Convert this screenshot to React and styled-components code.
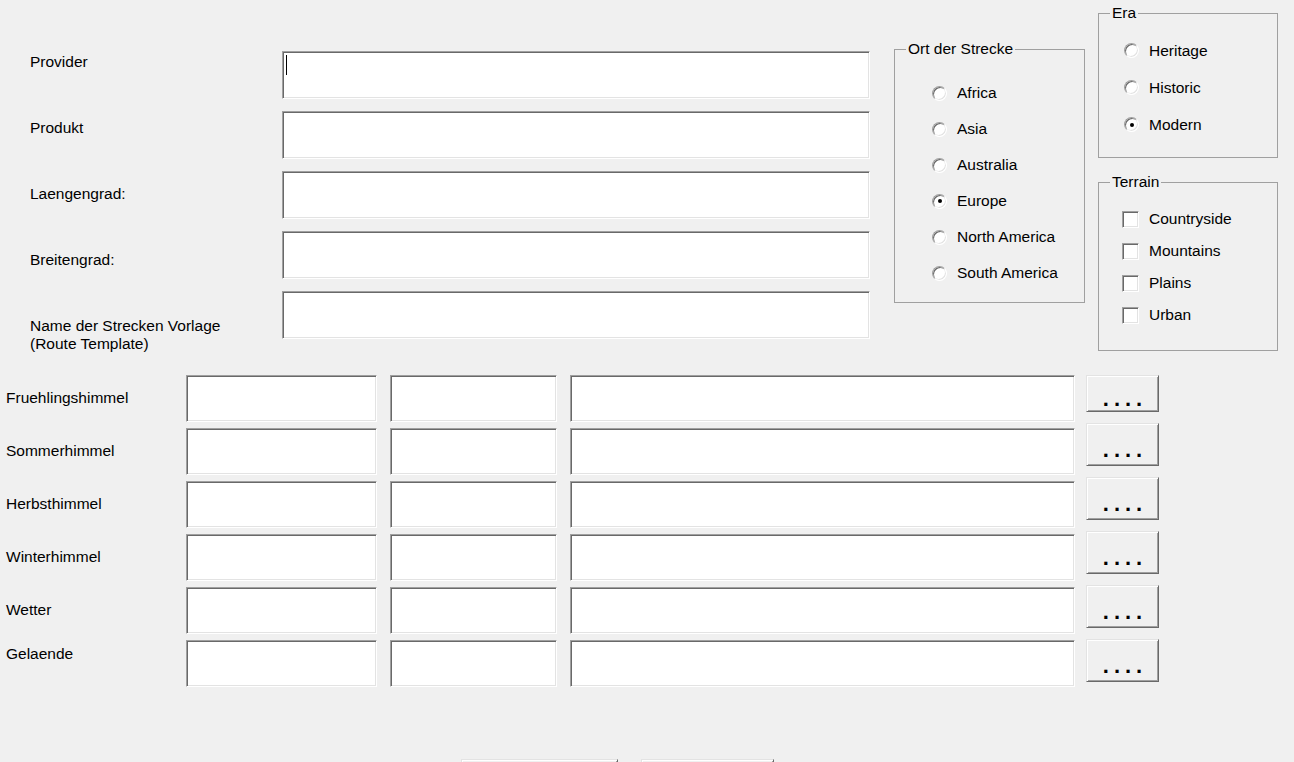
import React from 'react';
import styled, { createGlobalStyle } from 'styled-components';

const GlobalStyle = createGlobalStyle`
  html, body {
    margin: 0;
    padding: 0;
    height: 100%;
    overflow: hidden;
    background: #f0f0f0;
  }
  body {
    font-family: "Liberation Sans", Arial, sans-serif;
    font-size: 15.5px;
    color: #000;
  }
  #root {
    width: 1294px;
    height: 762px;
    overflow: hidden;
  }
`;

const Window = styled.div`
  width: 1294px;
  height: 762px;
  background: #f0f0f0;
  display: flex;
  flex-direction: column;
`;

const TopSection = styled.div`
  display: flex;
  align-items: flex-start;
  height: 375px;
  flex: none;
`;

const LabelCol = styled.div`
  width: 282px;
  box-sizing: border-box;
  padding: 53px 0 0 30px;
  display: flex;
  flex-direction: column;
  flex: none;
`;

const FieldLabel = styled.div`
  height: 66px;
  line-height: ${(p) => (p.$multi ? 18 : 17)}px;
  flex: none;
`;

const InputCol = styled.div`
  width: 588px;
  flex: none;
  padding-top: 51px;
  display: flex;
  flex-direction: column;
  gap: 12px;
`;

const TextBox = styled.div`
  box-sizing: border-box;
  height: ${(p) => p.$h || 48}px;
  background: #fff;
  border: 1px solid;
  border-color: #a0a0a0 #ffffff #ffffff #a0a0a0;
  box-shadow: inset 1px 1px 0 #696969, inset -1px -1px 0 #e3e3e3;
  padding: 3px 0 0 3px;
`;

const Caret = styled.span`
  display: block;
  width: 1px;
  height: 20px;
  background: #000;
`;

const Group = styled.fieldset`
  box-sizing: border-box;
  margin: ${(p) => p.$mt}px 0 0 ${(p) => p.$ml || 0}px;
  padding: 0;
  min-width: 0;
  width: ${(p) => p.$w}px;
  height: ${(p) => p.$h}px;
  border: 1px solid #a0a0a0;
  flex: none;
`;

const Legend = styled.legend`
  margin-left: 11px;
  padding: 0 2px;
  line-height: 18px;
  font-size: 15.5px;
`;

const RightCol = styled.div`
  display: flex;
  flex-direction: column;
  margin-left: 13px;
  flex: none;
`;

const OptionList = styled.div`
  display: flex;
  flex-direction: column;
  padding: ${(p) => p.$pt}px 0 0 ${(p) => p.$pl}px;
`;

const Option = styled.div`
  display: flex;
  align-items: center;
  gap: 10px;
  height: ${(p) => p.$rh}px;
  white-space: nowrap;
`;

const Radio = styled.span`
  box-sizing: border-box;
  width: 15px;
  height: 15px;
  border-radius: 50%;
  background: #fff;
  border: 1px solid;
  border-color: #a0a0a0 #ffffff #ffffff #a0a0a0;
  box-shadow: inset 1px 1px 0 #696969, inset -1px -1px 0 #e3e3e3;
  display: flex;
  align-items: center;
  justify-content: center;
  flex: none;

  &::after {
    content: '';
    display: ${(p) => (p.$checked ? 'block' : 'none')};
    width: 4px;
    height: 4px;
    border-radius: 50%;
    background: #000;
  }
`;

const Check = styled.span`
  box-sizing: border-box;
  width: 17px;
  height: 17px;
  background: #fff;
  border: 1px solid;
  border-color: #a0a0a0 #ffffff #ffffff #a0a0a0;
  box-shadow: inset 1px 1px 0 #696969, inset -1px -1px 0 #e3e3e3;
  flex: none;
`;

const SkySection = styled.div`
  display: flex;
  align-items: flex-start;
  flex: none;
`;

const SkyGrid = styled.div`
  display: grid;
  grid-template-columns: 173px 191px 167px 505px;
  grid-template-rows: repeat(6, 47px);
  column-gap: 13px;
  row-gap: 6px;
`;

const SkyLabel = styled.div`
  padding: ${(p) => p.$top}px 0 0 6px;
  line-height: 17px;
  white-space: nowrap;
`;

const ButtonStack = styled.div`
  margin-left: 11px;
  display: flex;
  flex-direction: column;
  gap: 11px;
`;

const RaisedButton = styled.button`
  box-sizing: border-box;
  width: ${(p) => p.$w}px;
  height: ${(p) => p.$h}px;
  margin: 0;
  padding: 0;
  background: #f0f0f0;
  border: 1px solid;
  border-color: #e3e3e3 #696969 #696969 #e3e3e3;
  box-shadow: inset 1px 1px 0 #ffffff, inset -1px -1px 0 #a0a0a0;
  font-family: "Liberation Sans", Arial, sans-serif;
  color: #000;
  flex: none;
`;

const DotsButton = styled(RaisedButton)`
  display: flex;
  align-items: center;
  justify-content: center;
  padding: 10px 0 0 5px;
  font-size: 22px;
  font-weight: bold;
  line-height: 22px;
  letter-spacing: 5px;
`;

const ButtonBar = styled.div`
  display: flex;
  gap: 23px;
  padding-left: 461px;
  margin-top: 72px;
  flex: none;
`;

const topLabels = [
  { text: 'Provider' },
  { text: 'Produkt' },
  { text: 'Laengengrad:' },
  { text: 'Breitengrad:' },
  { text: ['Name der Strecken Vorlage', '(Route Template)'], multi: true },
];

const regions = [
  { name: 'Africa' },
  { name: 'Asia' },
  { name: 'Australia' },
  { name: 'Europe', checked: true },
  { name: 'North America' },
  { name: 'South America' },
];

const eras = [
  { name: 'Heritage' },
  { name: 'Historic' },
  { name: 'Modern', checked: true },
];

const terrains = ['Countryside', 'Mountains', 'Plains', 'Urban'];

const skies = [
  { label: 'Fruehlingshimmel', top: 14 },
  { label: 'Sommerhimmel', top: 14 },
  { label: 'Herbsthimmel', top: 14 },
  { label: 'Winterhimmel', top: 14 },
  { label: 'Wetter', top: 14 },
  { label: 'Gelaende', top: 5 },
];

export default function App() {
  return (
    <>
      <GlobalStyle />
      <Window>
        <TopSection>
          <LabelCol>
            {topLabels.map((l, i) => (
              <FieldLabel key={i} $multi={l.multi}>
                {Array.isArray(l.text)
                  ? l.text.map((t, j) => <div key={j}>{t}</div>)
                  : l.text}
              </FieldLabel>
            ))}
          </LabelCol>
          <InputCol>
            <TextBox>
              <Caret />
            </TextBox>
            <TextBox />
            <TextBox />
            <TextBox />
            <TextBox />
          </InputCol>

          <Group $mt={40} $ml={24} $w={191} $h={263}>
            <Legend>Ort der Strecke</Legend>
            <OptionList $pt={17} $pl={37}>
              {regions.map((r) => (
                <Option key={r.name} $rh={36}>
                  <Radio $checked={r.checked} />
                  {r.name}
                </Option>
              ))}
            </OptionList>
          </Group>

          <RightCol>
            <Group $mt={4} $w={180} $h={154}>
              <Legend>Era</Legend>
              <OptionList $pt={10} $pl={25}>
                {eras.map((e) => (
                  <Option key={e.name} $rh={37}>
                    <Radio $checked={e.checked} />
                    {e.name}
                  </Option>
                ))}
              </OptionList>
            </Group>
            <Group $mt={15} $w={180} $h={178}>
              <Legend>Terrain</Legend>
              <OptionList $pt={12} $pl={23}>
                {terrains.map((t) => (
                  <Option key={t} $rh={32}>
                    <Check />
                    {t}
                  </Option>
                ))}
              </OptionList>
            </Group>
          </RightCol>
        </TopSection>

        <SkySection>
          <SkyGrid>
            {skies.map((s) => (
              <React.Fragment key={s.label}>
                <SkyLabel $top={s.top}>{s.label}</SkyLabel>
                <TextBox $h={47} />
                <TextBox $h={47} />
                <TextBox $h={47} />
              </React.Fragment>
            ))}
          </SkyGrid>
          <ButtonStack>
            {skies.map((s, i) => (
              <DotsButton key={s.label} $w={73} $h={i === 0 ? 37 : 43}>
                ....
              </DotsButton>
            ))}
          </ButtonStack>
        </SkySection>

        <ButtonBar>
          <RaisedButton $w={157} $h={30} />
          <RaisedButton $w={133} $h={30} />
        </ButtonBar>
      </Window>
    </>
  );
}
